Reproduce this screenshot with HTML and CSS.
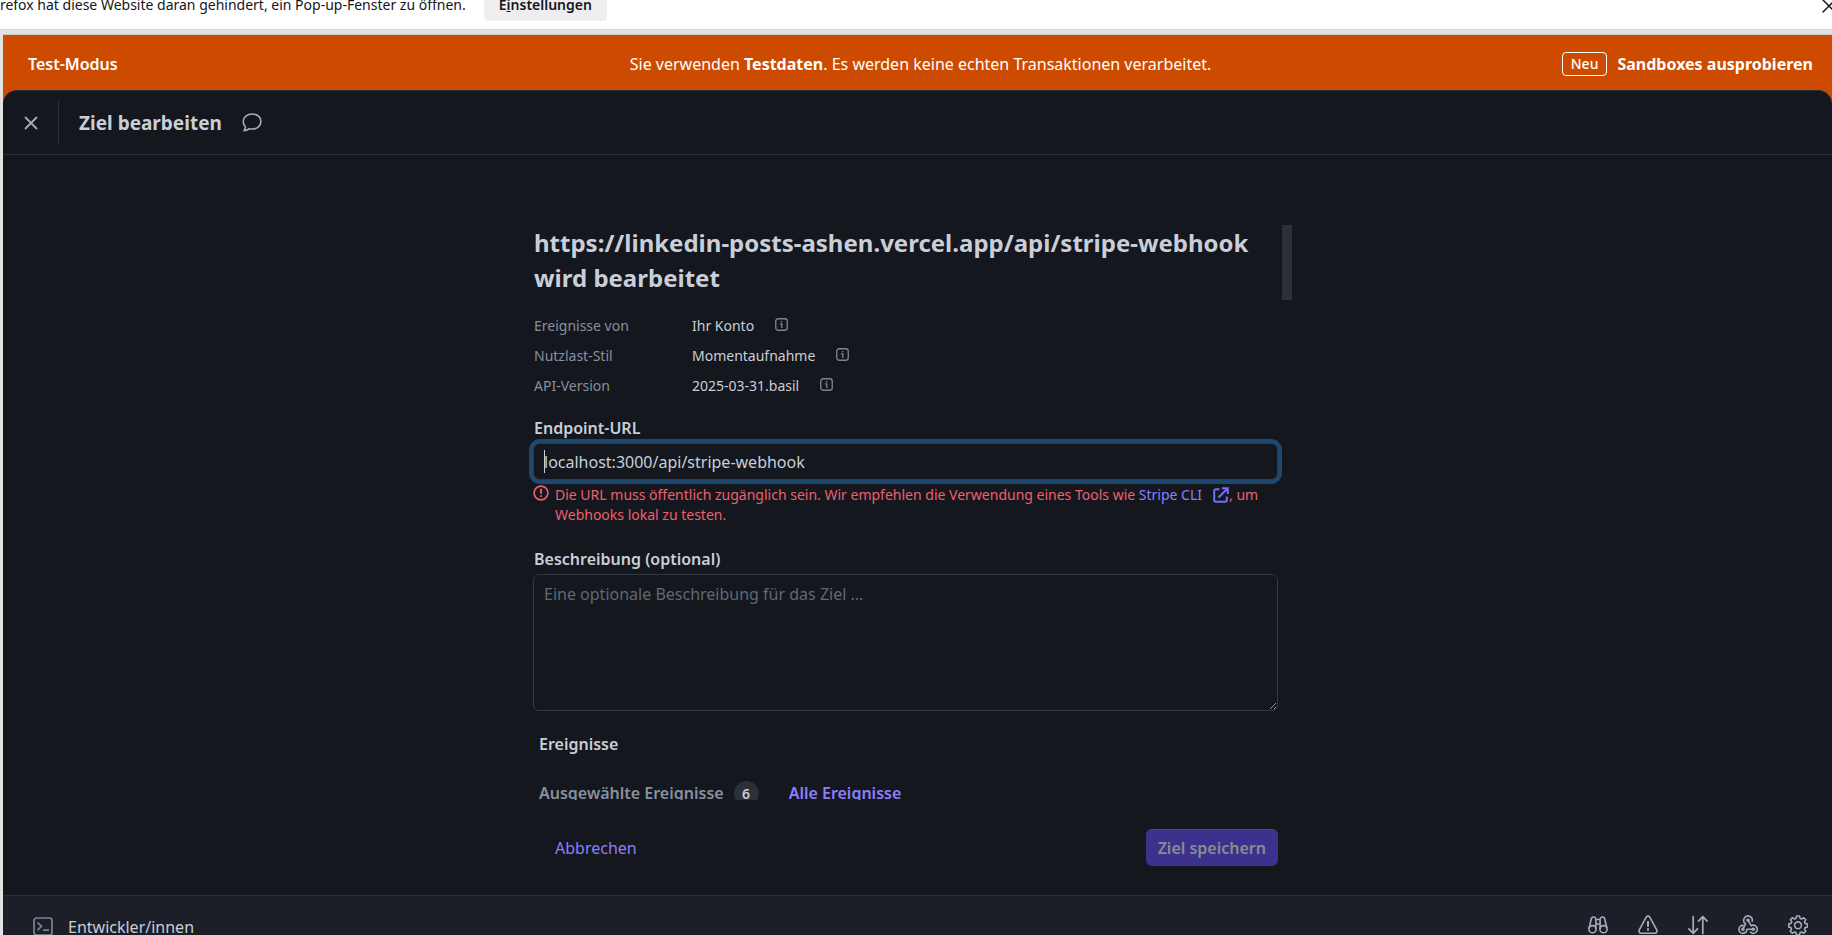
FILE: index.html
```html
<!DOCTYPE html>
<html lang="de">
<head>
<meta charset="utf-8">
<title>Ziel bearbeiten</title>
<link rel="stylesheet" href="styles.css">
</head>
<body>
<div class="browser">
  <div class="notice">
    <p class="notice-text">Firefox hat diese Website daran gehindert, ein Pop-up-Fenster zu öffnen.</p>
    <button class="notice-button" type="button">E<u>i</u>nstellungen</button>
    <button class="notice-close" type="button" aria-label="Schließen">
      <svg width="16" height="16" viewBox="0 0 16 16" fill="none" stroke="currentColor" stroke-width="1.5" stroke-linecap="round"><path d="M2 2l12 12M14 2L2 14"/></svg>
    </button>
  </div>
  <div class="app">
    <div class="banner">
      <strong class="banner-mode">Test-Modus</strong>
      <p class="banner-text">Sie verwenden <b>Testdaten</b>. Es werden keine echten Transaktionen verarbeitet.</p>
      <a class="banner-link" href="#"><span class="tag">Neu</span>Sandboxes ausprobieren</a>
    </div>
    <div class="panel">
      <header class="panel-header">
        <button class="icon-button close" type="button" aria-label="Schließen">
          <svg width="14" height="14" viewBox="0 0 14 14" fill="none" stroke="currentColor" stroke-width="1.8" stroke-linecap="round"><path d="M1.500 1.500l11 11M12.500 1.500l-11 11"/></svg>
        </button>
        <h1 class="panel-title">Ziel bearbeiten</h1>
        <button class="icon-button" type="button" aria-label="Feedback">
          <svg width="20" height="19" viewBox="0 0 20 19" fill="none" stroke="currentColor" stroke-width="1.600" stroke-linejoin="round"><path d="M10.300 1C5.200 1 1.200 4.200 1.200 8.500c0 2 .8 3.700 2.200 5 .1 1.700-.4 3-1.400 4.300 2.300-.1 4-.9 5.300-2.100 1 .2 1.900.3 3 .3 5.100 0 8.600-3.200 8.600-7.500S15.400 1 10.300 1z"/></svg>
        </button>
      </header>
      <main class="main">
        <form class="form" id="destination">
          <div class="scroller">
            <h2 class="title">https://linkedin-posts-ashen.vercel.app/api/stripe-webhook wird bearbeitet</h2>
            <dl class="facts">
              <dt>Ereignisse von</dt>
              <dd>Ihr Konto <svg class="info" viewBox="0 0 13 13"><rect x=".75" y=".75" width="11.500" height="11.500" rx="2.500"/><path d="M5 5.800h1.800V10M6.600 3v1.300"/></svg></dd>
              <dt>Nutzlast-Stil</dt>
              <dd>Momentaufnahme <svg class="info" viewBox="0 0 13 13"><rect x=".75" y=".75" width="11.500" height="11.500" rx="2.500"/><path d="M5 5.800h1.800V10M6.600 3v1.300"/></svg></dd>
              <dt>API-Version</dt>
              <dd>2025-03-31.basil <svg class="info" viewBox="0 0 13 13"><rect x=".75" y=".75" width="11.500" height="11.500" rx="2.500"/><path d="M5 5.800h1.800V10M6.600 3v1.300"/></svg></dd>
            </dl>
            <label class="label" for="url">Endpoint-URL</label>
            <div class="field">
              <input class="input" id="url" type="text" value="localhost:3000/api/stripe-webhook" aria-describedby="url-error">
              <span class="caret"></span>
            </div>
            <div class="error" id="url-error">
              <svg class="error-icon" width="16" height="16" viewBox="0 0 16 16" fill="none" stroke="currentColor" stroke-width="1.600"><circle cx="8" cy="8" r="6.900"/><path d="M8 3.800v5M8 10.200v1.900" stroke-width="1.800"/></svg>
              <p class="error-text">Die URL muss öffentlich zugänglich sein. Wir empfehlen die Verwendung eines Tools wie <a class="link" href="#">Stripe CLI<svg class="external" width="16" height="16" viewBox="0 0 16 16" fill="none" stroke="currentColor" stroke-width="2"><path d="M6.500 2.200H3A1.800 1.800 0 0 0 1.200 4v9A1.800 1.800 0 0 0 3 14.800h9a1.800 1.800 0 0 0 1.800-1.800V9.500M9 1.200h5.800V7M14.500 1.500L5.500 10.500"/></svg></a>, um Webhooks lokal zu testen.</p>
            </div>
            <label class="label" for="description">Beschreibung (optional)</label>
            <textarea class="textarea" id="description" placeholder="Eine optionale Beschreibung für das Ziel ..."></textarea>
            <h3 class="events-title">Ereignisse</h3>
            <div class="tabs">
              <button class="tab" type="button">Ausgewählte Ereignisse<span class="count">6</span></button>
              <button class="tab tab-link" type="button">Alle Ereignisse</button>
            </div>
          </div>
          <div class="thumb"></div>
          <div class="actions">
            <button class="cancel" type="button">Abbrechen</button>
            <button class="save" type="submit" disabled>Ziel speichern</button>
          </div>
        </form>
      </main>
      <footer class="footer">
        <button class="developers" type="button">
          <svg width="20" height="20" viewBox="0 0 20 20" fill="none" stroke="currentColor" stroke-width="1.700"><rect x="1" y="1" width="18" height="17" rx="2.500"/><path d="M4.500 5.500L8.500 9.300l-4 3.800M10 13.200h6"/></svg>
          <span>Entwickler/innen</span>
        </button>
        <nav class="tools">
          <button class="icon-button" type="button" aria-label="Suchen">
            <svg width="20" height="20" viewBox="0 0 20 20" fill="none" stroke="currentColor" stroke-width="1.600"><circle cx="4.500" cy="14.200" r="3.600"/><circle cx="15.500" cy="14.200" r="3.600"/><path d="M1 13.500L3.300 3.800C3.700 2.200 5 1.700 6.200 2.100 7.400 2.500 7.900 3.200 7.900 4.500V14M19 13.500L16.700 3.800C16.300 2.200 15 1.700 13.800 2.100 12.600 2.500 12.100 3.200 12.100 4.500V14M8 4.500h4M8 9h4"/></svg>
          </button>
          <button class="icon-button" type="button" aria-label="Fehler">
            <svg width="20" height="20" viewBox="0 0 20 20" fill="none" stroke="currentColor" stroke-width="1.600" stroke-linejoin="round"><path d="M8.200 2.200c.8-1.400 2.800-1.400 3.600 0l6.900 12.600c.9 1.600-.1 3.400-1.900 3.400H3.200c-1.800 0-2.800-1.800-1.900-3.400z"/><path d="M10 6v5.800M10 13.200v2.200" stroke-width="2"/></svg>
          </button>
          <button class="icon-button" type="button" aria-label="Anfragen">
            <svg width="20" height="20" viewBox="0 0 20 20" fill="none" stroke="currentColor" stroke-width="1.700" stroke-linecap="round" stroke-linejoin="round"><path d="M5.200 1.500v16.800M.9 13.800l4.300 4.500 4.300-4.500M14.800 18.500V1.800M10.500 6.200l4.300-4.500 4.300 4.500"/></svg>
          </button>
          <button class="icon-button" type="button" aria-label="Webhooks">
            <svg width="20" height="20" viewBox="0 0 20 20" fill="none" stroke="currentColor" stroke-width="1.600" stroke-linecap="round" stroke-linejoin="round"><path d="M14.200 6.200A4.300 4.300 0 1 0 7.600 8.800L5 13.800M10 5.200l3.200 5.600a4 4 0 1 1-.7 6.400M5 10.400a4 4 0 1 0 3.900 3.900h6.300"/><circle cx="10" cy="5.200" r="1"/><circle cx="4.900" cy="14.300" r="1"/><circle cx="15.300" cy="14.300" r="1"/></svg>
          </button>
          <button class="icon-button" type="button" aria-label="Einstellungen">
            <svg width="20" height="20" viewBox="0 0 20 20" fill="none" stroke="currentColor" stroke-width="1.600" stroke-linejoin="round"><path d="M8.500 1h3l.6 2.400 1.500.6 2.200-1.300 2 2-1.300 2.200.6 1.500 2.400.6v3l-2.400.6-.6 1.500 1.300 2.200-2 2-2.200-1.300-1.500.6-.6 2.400h-3l-.6-2.400-1.500-.6-2.200 1.300-2-2 1.300-2.200-.6-1.500L.8 11.900V8.900l2.400-.6.6-1.500-1.300-2.200 2-2L6.500 4l1.500-.6z"/><circle cx="10" cy="10.300" r="3.400"/></svg>
          </button>
        </nav>
      </footer>
    </div>
  </div>
</div>
</body>
</html>
```
FILE: styles.css
```css
:root {
  --bg: #14171d;
  --line: #2c3038;
  --text: #c9ced8;
  --muted: #87909f;
  --icon: #a3acba;
  --link: #8d7ffa;
  --danger: #f05f6f;
  --orange: #cc4b00;
}

* { box-sizing: border-box; }

body {
  margin: 0;
  font-family: "Noto Sans", "Open Sans", sans-serif;
  font-size: 16px;
  line-height: 24px;
  color: var(--text);
}

h1, h2, h3, p, dl, dd { margin: 0; }

button {
  padding: 0;
  border: 0;
  background: none;
  font: inherit;
  color: inherit;
}

svg { display: block; }

.browser {
  display: flex;
  flex-direction: column;
  height: 100vh;
  overflow: hidden;
  background: #e2e2e3;
}

/* Browser notification strip, partly out of view */
.notice {
  display: flex;
  flex: 0 0 30px;
  align-items: flex-end;
  gap: 18px;
  overflow: hidden;
  padding-bottom: 8px;
  border-bottom: 1px solid #d5d5d7;
  background: #fff;
  color: #15141a;
  font-size: 14px;
}

.notice-text {
  margin-left: -11px;
  padding-bottom: 4px;
  white-space: nowrap;
}

.notice-button {
  flex: none;
  height: 32px;
  padding: 0 15px;
  border-radius: 4px;
  background: #eeeef0;
  font-weight: 600;
}

.notice-close {
  flex: none;
  margin: 0 -5px 7px auto;
}

.app {
  display: flex;
  flex: 1;
  flex-direction: column;
  min-height: 0;
  margin: 4px 0 0 3px;
  border-top: 1px solid #c9c9cc;
  background: var(--orange);
}

.banner {
  display: grid;
  grid-template-columns: 1fr auto 1fr;
  flex: 0 0 55px;
  align-items: center;
  padding: 2px 19px 0 25px;
  color: #fff;
}

.banner-mode { font-weight: 600; }

.banner-link {
  display: flex;
  align-items: center;
  justify-self: end;
  gap: 10px;
  color: #fff;
  font-weight: 700;
  text-decoration: none;
}

.tag {
  padding: 0 8px;
  border: 1px solid #fff;
  border-radius: 4px;
  font-size: 14px;
  font-weight: 500;
  line-height: 22px;
}

.panel {
  display: flex;
  flex: 1;
  flex-direction: column;
  min-height: 0;
  border-top: 1px solid var(--line);
  border-radius: 14px 14px 0 0;
  background: var(--bg);
}

.panel-header {
  display: flex;
  flex: 0 0 64px;
  align-items: center;
  gap: 20px;
  padding: 0 21px;
  border-bottom: 1px solid var(--line);
}

.icon-button { color: var(--icon); }

.close {
  width: 35px;
  height: 44px;
  border-right: 1px solid var(--line);
}

.panel-title {
  font-size: 19px;
  font-weight: 700;
}

.main {
  display: flex;
  flex: 1;
  justify-content: center;
  min-height: 0;
  padding: 70px 14px 0 0;
}

.form {
  position: relative;
  display: flex;
  flex-direction: column;
  width: 763px;
}

.scroller {
  flex: 1;
  min-height: 0;
  overflow: hidden;
  padding: 0 14px 0 4px;
}

.thumb {
  position: absolute;
  top: 0;
  right: 0;
  width: 10px;
  height: 75px;
  background: var(--line);
}

.title {
  margin-bottom: 16px;
  padding-left: 1px;
  font-size: 24px;
  font-weight: 700;
  line-height: 35px;
}

.facts {
  display: grid;
  grid-template-columns: 158px 1fr;
  margin-bottom: 15px;
  padding-left: 1px;
  font-size: 14px;
  line-height: 30px;
}

.facts dt { color: var(--muted); }

.facts dd {
  display: flex;
  gap: 21px;
}

.info {
  width: 13px;
  height: 13px;
  margin-top: 7px;
  fill: none;
  stroke: #7c8594;
  stroke-width: 1.3;
}

.label {
  display: block;
  margin-bottom: 3px;
  padding-left: 1px;
  font-weight: 600;
}

.field { position: relative; }

.input,
.textarea {
  display: block;
  width: 100%;
  border: 1px solid #333841;
  border-radius: 6px;
  background: var(--bg);
  color: var(--text);
  font: inherit;
}

.input {
  height: 37px;
  padding: 0 10px;
  box-shadow: 0 0 0 4px #1e486d;
  border-radius: 7px;
}

.caret {
  position: absolute;
  top: 7px;
  left: 11px;
  width: 1px;
  height: 23px;
  background: var(--text);
}

.error {
  display: flex;
  gap: 6px;
  margin: 5px 0 22px;
  color: var(--danger);
  font-size: 14px;
  line-height: 20px;
}

.error-icon { flex: none; }

.link {
  color: var(--link);
  text-decoration: none;
}

.external {
  display: inline-block;
  margin-left: 11px;
  vertical-align: -3px;
  color: #7a6bf5;
}

.textarea {
  height: 137px;
  padding: 7px 10px;
  resize: vertical;
}

.textarea::placeholder { color: #606874; }

.events-title {
  margin: 21px 0 25px;
  padding-left: 6px;
  font-size: 16px;
  font-weight: 600;
}

.tabs {
  display: flex;
  gap: 30px;
  padding-left: 6px;
}

.tab {
  display: flex;
  gap: 10px;
  color: var(--muted);
  font-weight: 600;
}

.tab-link { color: var(--link); }

.count {
  width: 25px;
  height: 25px;
  border-radius: 13px;
  background: var(--line);
  color: var(--text);
  font-size: 14px;
  line-height: 26px;
}

.actions {
  display: flex;
  align-items: center;
  justify-content: space-between;
  padding: 29px 14px 29px 26px;
}

.cancel { color: var(--link); }

.save {
  height: 37px;
  padding: 0 12px;
  border-top: 1px solid #4a419c;
  border-radius: 6px;
  background: #3b328e;
  color: #8b8a90;
  font-weight: 600;
}

.footer {
  display: flex;
  flex: 0 0 40px;
  align-items: flex-start;
  justify-content: space-between;
  overflow: hidden;
  padding: 19px 24px 0 30px;
  border-top: 1px solid var(--line);
  background: #1c1f27;
}

.developers {
  display: flex;
  align-items: center;
  gap: 15px;
}

.developers svg { color: #7c8594; }

.tools {
  display: flex;
  gap: 30px;
}
```
